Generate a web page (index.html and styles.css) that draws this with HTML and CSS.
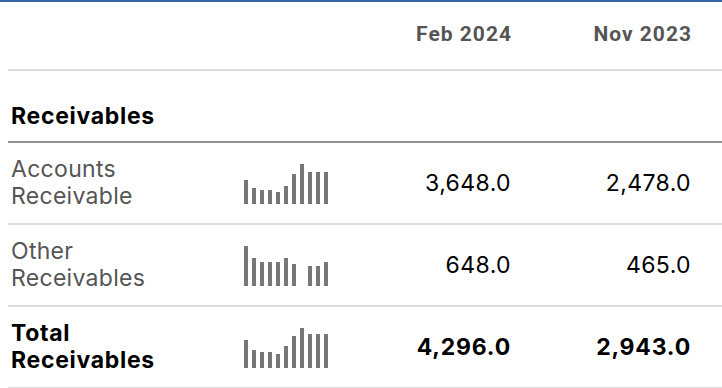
FILE: index.html
```html
<!DOCTYPE html>
<html>
<head>
<meta charset="utf-8">
<link rel="stylesheet" href="styles.css">
</head>
<body>
<div class="page">
  <div class="table">
    <div class="row head">
      <div class="label"></div>
      <div class="spark"></div>
      <div class="num">Feb 2024</div>
      <div class="num">Nov 2023</div>
    </div>
    <div class="row section">
      <div class="label">Receivables</div>
    </div>
    <div class="row item">
      <div class="label">Accounts<br>Receivable</div>
      <div class="spark">
        <i style="height:24px"></i><i style="height:16px"></i><i style="height:14px"></i><i style="height:14px"></i><i style="height:12px"></i><i style="height:18px"></i><i style="height:30px"></i><i style="height:40px"></i><i style="height:32px"></i><i style="height:32px"></i><i style="height:32px"></i>
      </div>
      <div class="num">3,648.0</div>
      <div class="num">2,478.0</div>
    </div>
    <div class="row item">
      <div class="label">Other<br>Receivables</div>
      <div class="spark">
        <i style="height:40px"></i><i style="height:28px"></i><i style="height:24px"></i><i style="height:24px"></i><i style="height:24px"></i><i style="height:28px"></i><i style="height:22px"></i><i style="height:0px"></i><i style="height:20px"></i><i style="height:20px"></i><i style="height:24px"></i>
      </div>
      <div class="num">648.0</div>
      <div class="num">465.0</div>
    </div>
    <div class="row item total">
      <div class="label">Total<br>Receivables</div>
      <div class="spark">
        <i style="height:28px"></i><i style="height:18px"></i><i style="height:16px"></i><i style="height:16px"></i><i style="height:14px"></i><i style="height:22px"></i><i style="height:32px"></i><i style="height:40px"></i><i style="height:34px"></i><i style="height:34px"></i><i style="height:34px"></i>
      </div>
      <div class="num">4,296.0</div>
      <div class="num">2,943.0</div>
    </div>
  </div>
</div>
</body>
</html>
```
FILE: styles.css
```css
html, body {
  margin: 0;
  padding: 0;
  background: #fff;
}
.page {
  border-top: 2px solid #3567a5;
  padding-left: 8px;
  font-family: Inter, "Liberation Sans", sans-serif;
}
.table {
  display: flex;
  flex-direction: column;
}
.row {
  display: grid;
  grid-template-columns: 236px 100px 167px 180px;
  align-items: center;
  border-bottom: 2px solid #dcdcdc;
}
.head {
  height: 67px;
}
.head .num {
  font-family: Roboto, sans-serif;
  font-weight: 700;
  font-size: 21px;
  letter-spacing: 1px;
  margin-right: -1px;
  color: #555;
  padding-bottom: 4px;
}
.section {
  height: 70px;
  border-bottom-color: #909497;
  align-items: end;
}
.section .label {
  font-weight: 700;
  font-size: 23px;
  letter-spacing: 0.7px;
  color: #000;
  padding-bottom: 11px;
}
.item {
  height: 80px;
}
.label {
  padding-left: 3px;
  font-size: 23px;
  letter-spacing: 0.3px;
  line-height: 27.5px;
  color: #555;
}
.num {
  text-align: right;
  font-size: 23px;
  letter-spacing: 0.4px;
  color: #000;
}
.spark {
  display: flex;
  align-items: flex-end;
  gap: 4px;
  height: 40px;
  padding-top: 2px;
}
.spark i {
  display: block;
  width: 4px;
  background: #777;
}
.total .label {
  color: #000;
  font-weight: 700;
  letter-spacing: 0.7px;
}
.total .num {
  font-weight: 700;
  letter-spacing: 0.8px;
}
```
